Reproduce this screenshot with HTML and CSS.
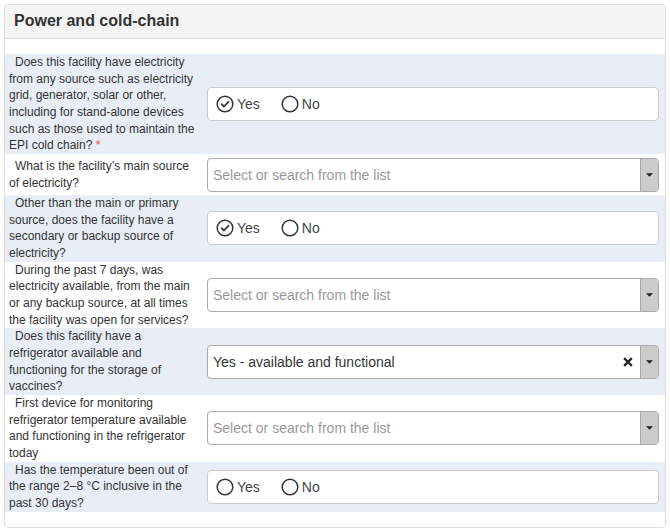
FILE: index.html
```html
<!DOCTYPE html>
<html>
<head>
<meta charset="utf-8">
<link rel="stylesheet" href="styles.css">
</head>
<body>
<div class="panel">
  <div class="panel-head">Power and cold-chain</div>
  <div class="panel-body">
    <div class="row alt">
      <div class="label">Does this facility have electricity from any source such as electricity grid, generator, solar or other, including for stand-alone devices such as those used to maintain the EPI cold chain? <span class="req">*</span></div>
      <div class="field">
        <div class="radios">
          <span class="opt"><svg class="ico" viewBox="0 0 18 18"><circle cx="9" cy="9" r="7.8" fill="none" stroke="#333" stroke-width="1.5"/><path d="M5.6 9.2 L8 11.5 L12.4 6.8" fill="none" stroke="#333" stroke-width="1.8" stroke-linecap="round" stroke-linejoin="round"/></svg>Yes</span>
          <span class="opt"><svg class="ico" viewBox="0 0 18 18"><circle cx="9" cy="9" r="7.8" fill="none" stroke="#333" stroke-width="1.5"/></svg>No</span>
        </div>
      </div>
    </div>
    <div class="row">
      <div class="label">What is the facility’s main source of electricity?</div>
      <div class="field">
        <div class="select"><span class="ph">Select or search from the list</span><span class="btn"><svg class="caret" viewBox="0 0 8 4"><path d="M0 0 H8 L4 4 Z" fill="#222"/></svg></span></div>
      </div>
    </div>
    <div class="row alt">
      <div class="label">Other than the main or primary source, does the facility have a secondary or backup source of electricity?</div>
      <div class="field">
        <div class="radios">
          <span class="opt"><svg class="ico" viewBox="0 0 18 18"><circle cx="9" cy="9" r="7.8" fill="none" stroke="#333" stroke-width="1.5"/><path d="M5.6 9.2 L8 11.5 L12.4 6.8" fill="none" stroke="#333" stroke-width="1.8" stroke-linecap="round" stroke-linejoin="round"/></svg>Yes</span>
          <span class="opt"><svg class="ico" viewBox="0 0 18 18"><circle cx="9" cy="9" r="7.8" fill="none" stroke="#333" stroke-width="1.5"/></svg>No</span>
        </div>
      </div>
    </div>
    <div class="row">
      <div class="label">During the past 7 days, was electricity available, from the main or any backup source, at all times the facility was open for services?</div>
      <div class="field">
        <div class="select"><span class="ph">Select or search from the list</span><span class="btn"><svg class="caret" viewBox="0 0 8 4"><path d="M0 0 H8 L4 4 Z" fill="#222"/></svg></span></div>
      </div>
    </div>
    <div class="row alt">
      <div class="label">Does this facility have a refrigerator available and functioning for the storage of vaccines?</div>
      <div class="field">
        <div class="select"><span class="val">Yes - available and functional</span><svg class="clear" viewBox="0 0 10 10"><path d="M2 2 L8 8 M8 2 L2 8" stroke="#222" stroke-width="2.4" stroke-linecap="square"/></svg><span class="btn"><svg class="caret" viewBox="0 0 8 4"><path d="M0 0 H8 L4 4 Z" fill="#222"/></svg></span></div>
      </div>
    </div>
    <div class="row">
      <div class="label">First device for monitoring refrigerator temperature available and functioning in the refrigerator today</div>
      <div class="field">
        <div class="select"><span class="ph">Select or search from the list</span><span class="btn"><svg class="caret" viewBox="0 0 8 4"><path d="M0 0 H8 L4 4 Z" fill="#222"/></svg></span></div>
      </div>
    </div>
    <div class="row alt">
      <div class="label">Has the temperature been out of the range 2–8 °C inclusive in the past 30 days?</div>
      <div class="field">
        <div class="radios">
          <span class="opt"><svg class="ico" viewBox="0 0 18 18"><circle cx="9" cy="9" r="7.8" fill="none" stroke="#333" stroke-width="1.5"/></svg>Yes</span>
          <span class="opt"><svg class="ico" viewBox="0 0 18 18"><circle cx="9" cy="9" r="7.8" fill="none" stroke="#333" stroke-width="1.5"/></svg>No</span>
        </div>
      </div>
    </div>
  </div>
</div>
</body>
</html>
```
FILE: styles.css
```css
* { box-sizing: border-box; }
html, body { margin: 0; padding: 0; background: #fff; }
body {
  padding: 4px;
  font-family: "Liberation Sans", Arial, sans-serif;
  color: #333;
}
.panel {
  border: 1px solid #ddd;
  border-radius: 4px;
  background: #fff;
}
.panel-head {
  background: #f4f4f4;
  border-bottom: 1px solid #ddd;
  border-radius: 3px 3px 0 0;
  padding: 7px 9px 9px;
  font-size: 16px;
  line-height: 17px;
  font-weight: bold;
  color: #333;
}
.panel-body {
  padding: 15px 0 15px;
}
.row {
  display: grid;
  grid-template-columns: 196px 1fr;
  align-items: center;
}
.row.alt { background: #e9eef6; }
.label {
  padding-left: 4px;
  font-size: 12px;
  line-height: 16.67px;
  text-indent: 6px;
  color: #333;
}
.req { color: #d9534f; }
.field {
  padding: 3.5px 6px;
}
.radios {
  height: 34px;
  border: 1px solid #ccc;
  border-radius: 4px;
  background: #fff;
  display: flex;
  align-items: center;
  gap: 21px;
  padding-left: 8px;
  font-size: 14px;
  color: #444;
}
.opt {
  display: flex;
  align-items: center;
  gap: 3px;
}
.ico { width: 18px; height: 18px; display: block; }
.select {
  height: 34px;
  border: 1px solid #aaa;
  border-radius: 4px;
  background: #fff;
  display: flex;
  align-items: center;
  font-size: 14px;
  padding-left: 5px;
}
.ph { color: #999; flex: 1; }
.val { color: #333; flex: 1; }
.clear { width: 10px; height: 10px; margin-right: 7px; }
.btn {
  width: 18px;
  align-self: stretch;
  background: #ccc;
  border-left: 1px solid #aaa;
  border-radius: 0 3px 3px 0;
  display: flex;
  align-items: center;
  justify-content: center;
}
.caret { width: 7px; height: 4px; display: block; }
```
